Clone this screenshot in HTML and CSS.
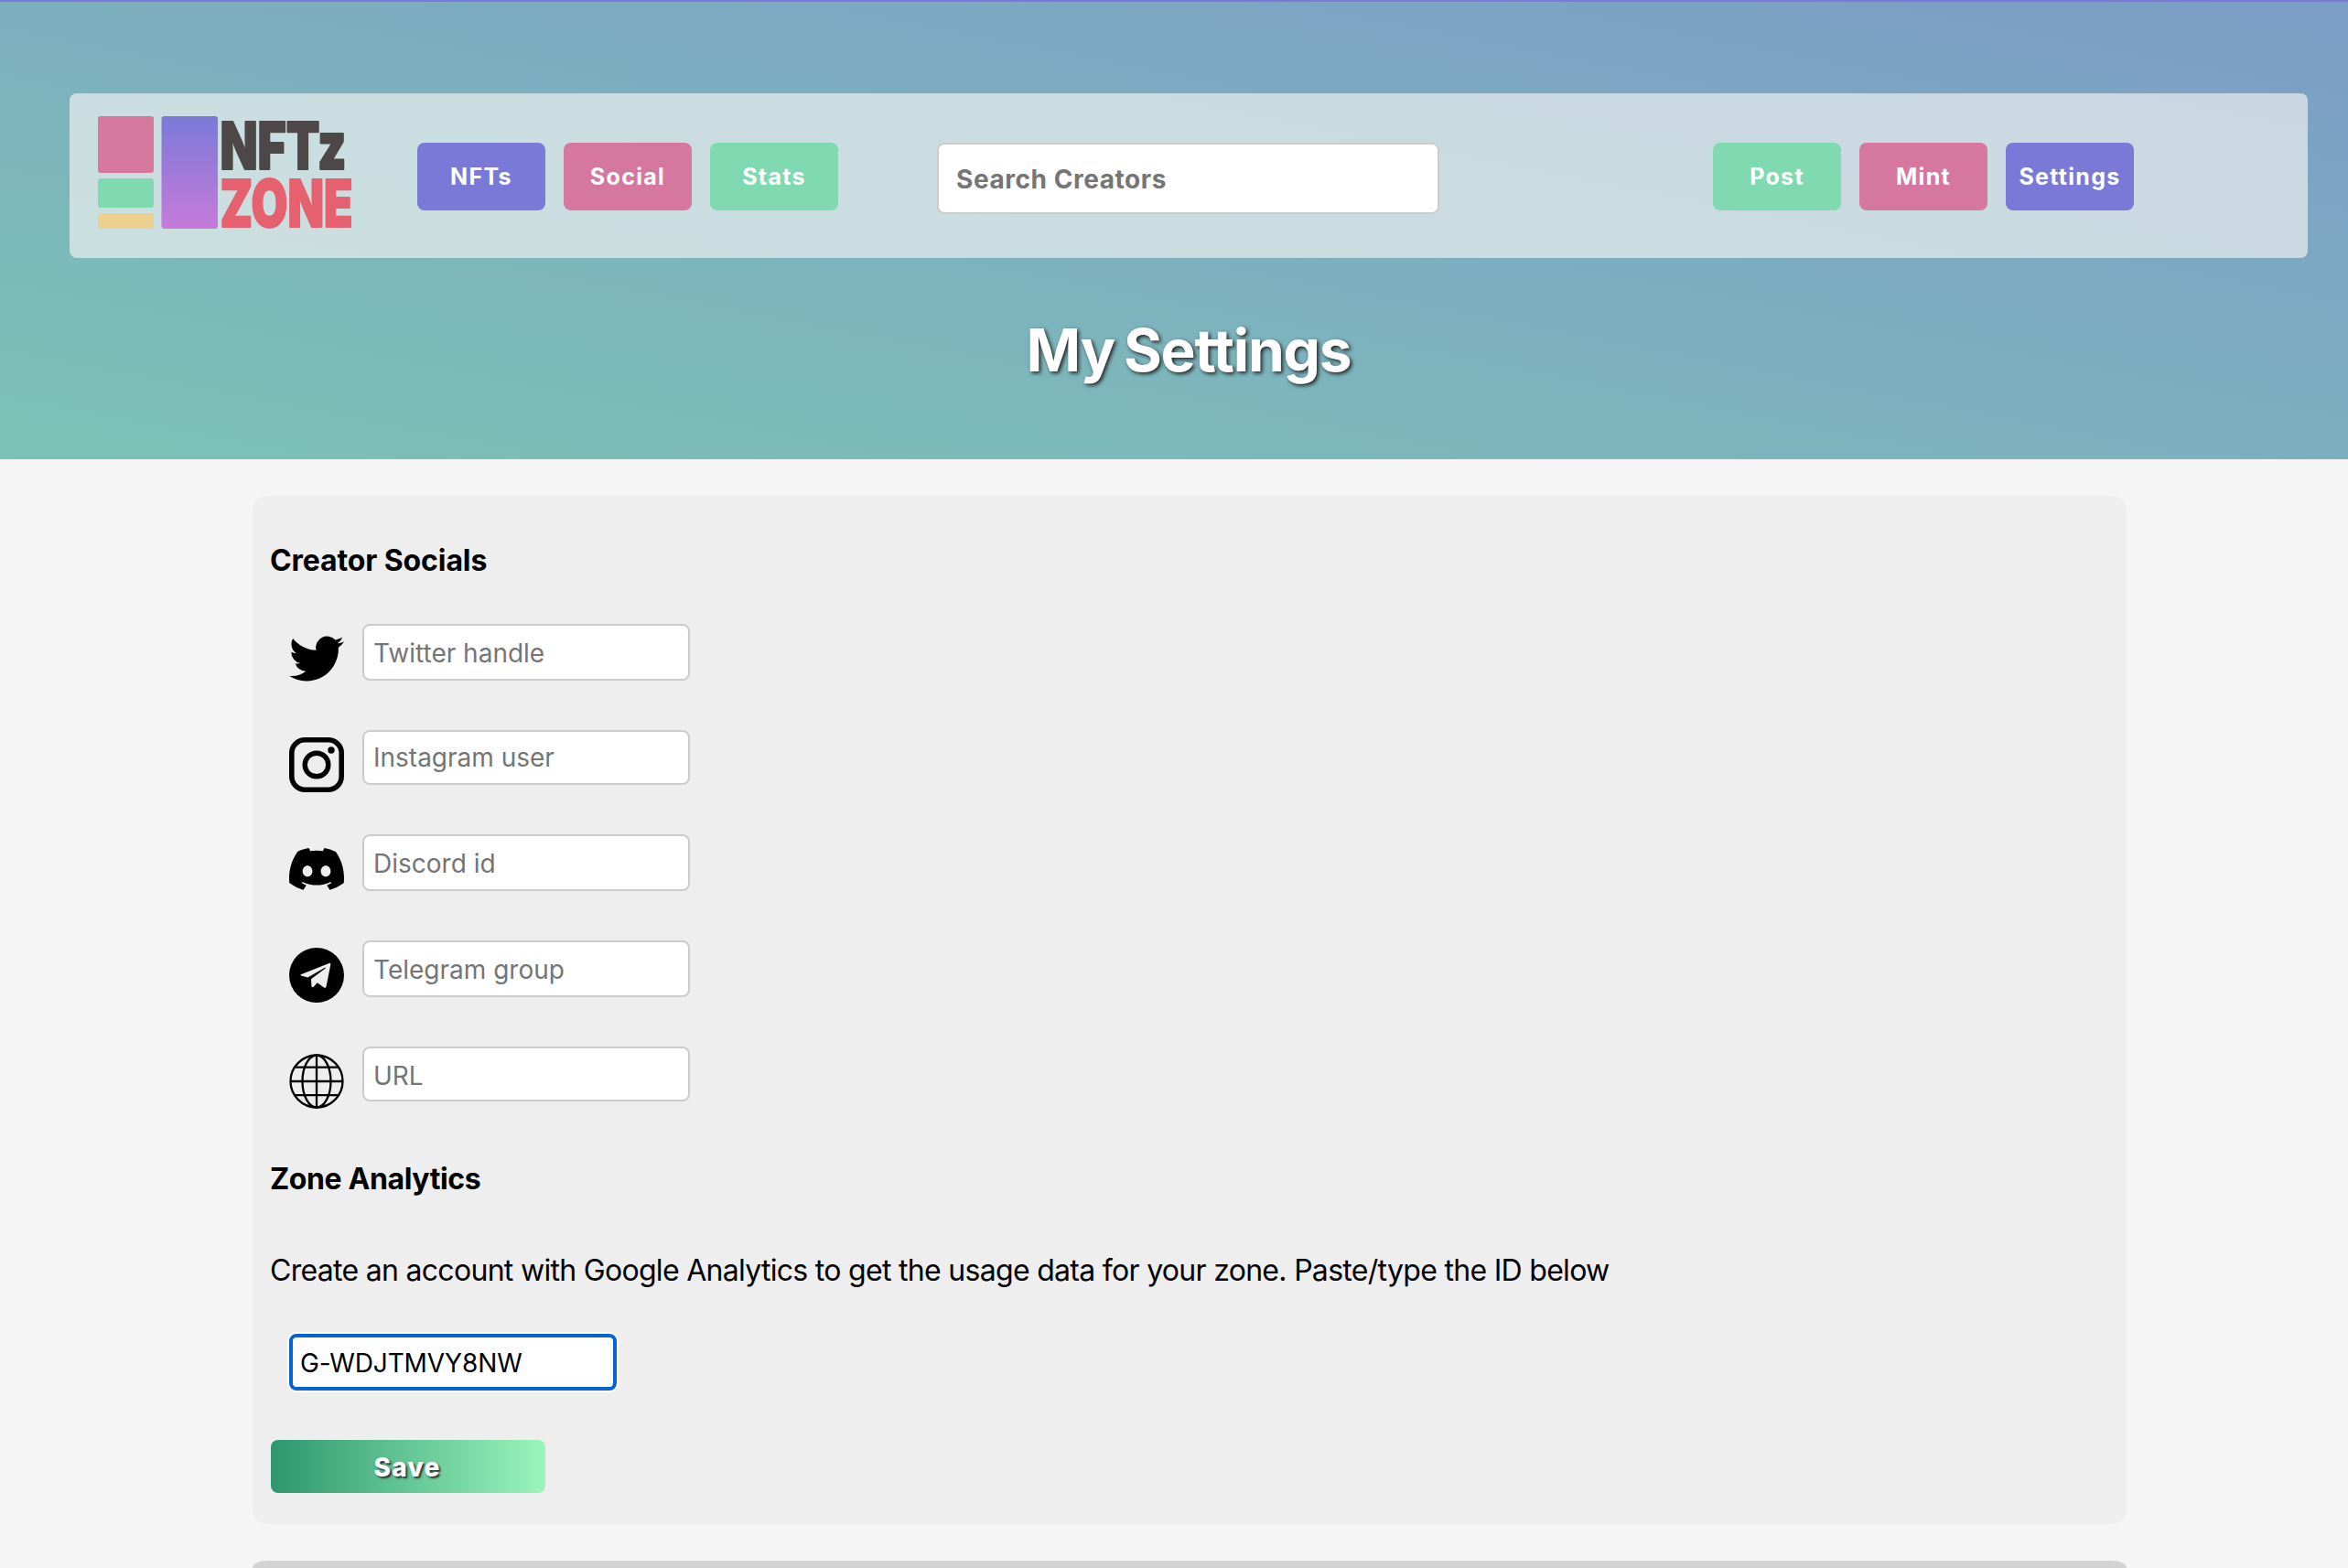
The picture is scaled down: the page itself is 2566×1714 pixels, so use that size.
FILE: index.html
```html
<!DOCTYPE html>
<html lang="en">
<head>
<meta charset="utf-8">
<title>My Settings</title>
<link rel="stylesheet" href="styles.css">
</head>
<body>
<header class="hero">
  <nav class="navbar">
    <svg class="logo" width="280" height="124" viewBox="0 0 280 124" role="img" aria-label="NFTz Zone">
      <defs>
        <linearGradient id="tower" x1="0" y1="0" x2="0" y2="1">
          <stop offset="0" stop-color="#7b79d8"/>
          <stop offset="1" stop-color="#c67ad9"/>
        </linearGradient>
      </defs>
      <rect x="1" y="0" width="61" height="62" rx="3" fill="#d6779f"/>
      <rect x="1" y="68" width="61" height="32" rx="3" fill="#7fd9b1"/>
      <rect x="1" y="106" width="61" height="17" rx="3" fill="#ebd08e"/>
      <rect x="70.500" y="0" width="61.500" height="123" rx="3" fill="url(#tower)"/>
      <text class="logo-text logo-dark" x="134.500" y="57.500" textLength="138" lengthAdjust="spacingAndGlyphs">NFTz</text>
      <text class="logo-text logo-red" x="134.500" y="120.500" textLength="145" lengthAdjust="spacingAndGlyphs">ZONE</text>
    </svg>
    <div class="nav-group nav-left">
      <a class="nav-btn violet">NFTs</a>
      <a class="nav-btn pink">Social</a>
      <a class="nav-btn green">Stats</a>
    </div>
    <input class="search" type="text" placeholder="Search Creators">
    <div class="nav-group nav-right">
      <a class="nav-btn green">Post</a>
      <a class="nav-btn pink">Mint</a>
      <a class="nav-btn violet">Settings</a>
    </div>
  </nav>
  <h1 class="title">My Settings</h1>
</header>
<main class="page">
  <section class="card">
    <h2 class="heading">Creator Socials</h2>
    <div class="socials">
      <label class="row">
        <svg class="icon" viewBox="0 0 24 24"><path d="M23.953 4.570a10 10 0 01-2.825.775 4.958 4.958 0 002.163-2.723c-.951.555-2.005.959-3.127 1.184a4.920 4.920 0 00-8.384 4.482C7.690 8.095 4.067 6.130 1.640 3.162a4.822 4.822 0 00-.666 2.475c0 1.710.870 3.213 2.188 4.096a4.904 4.904 0 01-2.228-.616v.060a4.923 4.923 0 003.946 4.827 4.996 4.996 0 01-2.212.085 4.936 4.936 0 004.604 3.417 9.867 9.867 0 01-6.102 2.105c-.390 0-.779-.023-1.170-.067a13.995 13.995 0 007.557 2.209c9.053 0 13.998-7.496 13.998-13.985 0-.210 0-.420-.015-.630A9.935 9.935 0 0024 4.590z"/></svg>
        <input class="field" type="text" placeholder="Twitter handle">
      </label>
      <label class="row row-short">
        <svg class="icon" viewBox="0 0 60 60">
          <rect x="2.800" y="2.800" width="54.400" height="54.400" rx="14.500" fill="none" stroke="#000" stroke-width="5.600"/>
          <circle cx="30" cy="30" r="12.800" fill="none" stroke="#000" stroke-width="5.400"/>
          <circle cx="46" cy="14" r="3.700"/>
        </svg>
        <input class="field field-short" type="text" placeholder="Instagram user">
      </label>
      <label class="row">
        <svg class="icon" viewBox="0 0 16 16"><path d="M13.545 2.907a13.227 13.227 0 0 0-3.257-1.011.05.05 0 0 0-.052.025c-.141.250-.297.577-.406.833a12.190 12.190 0 0 0-3.658 0 8.258 8.258 0 0 0-.412-.833.051.051 0 0 0-.052-.025c-1.125.194-2.220.534-3.257 1.011a.041.041 0 0 0-.021.018C.356 6.024-.213 9.047.066 12.032c.001.014.010.028.021.037a13.276 13.276 0 0 0 3.995 2.020.050.050 0 0 0 .056-.019c.308-.420.582-.863.818-1.329a.050.050 0 0 0-.010-.059.051.051 0 0 0-.018-.011 8.875 8.875 0 0 1-1.248-.595.050.050 0 0 1-.020-.066.051.051 0 0 1 .015-.019c.084-.063.168-.129.248-.195a.050.050 0 0 1 .051-.007c2.619 1.196 5.454 1.196 8.041 0a.052.052 0 0 1 .053.007c.080.066.164.132.248.195a.051.051 0 0 1-.004.085 8.254 8.254 0 0 1-1.249.594.050.050 0 0 0-.030.030.052.052 0 0 0 .003.041c.240.465.515.909.817 1.329a.050.050 0 0 0 .056.019 13.235 13.235 0 0 0 4.001-2.020.049.049 0 0 0 .021-.037c.334-3.451-.559-6.449-2.366-9.106a.034.034 0 0 0-.020-.019zm-8.198 7.307c-.789 0-1.438-.724-1.438-1.612 0-.889.637-1.613 1.438-1.613.807 0 1.450.730 1.438 1.613 0 .888-.637 1.612-1.438 1.612zm5.316 0c-.788 0-1.438-.724-1.438-1.612 0-.889.637-1.613 1.438-1.613.807 0 1.451.730 1.438 1.613 0 .888-.631 1.612-1.438 1.612z"/></svg>
        <input class="field" type="text" placeholder="Discord id">
      </label>
      <label class="row">
        <svg class="icon" viewBox="0 0 60 60">
          <circle cx="30" cy="30" r="30"/>
          <path fill="#eee" d="M12.800 29.200L43.600 17q2-.6 1.700 1.500L40.500 42.600q-.6 2-2.400.9L30.700 38.300 27 42.600q-2.200 1.500-2.600-.8L24 34.200 39.600 22.400q.8-1-.6-.6L20.400 32.500 13 30.600q-1.200-.7-.2-1.400z"/>
        </svg>
        <input class="field" type="text" placeholder="Telegram group">
      </label>
      <label class="row">
        <svg class="icon" viewBox="0 0 60 60" fill="none" stroke="#000" stroke-width="2.300">
          <circle cx="30" cy="30" r="28.500"/>
          <ellipse cx="30" cy="30" rx="15.500" ry="28.500"/>
          <path d="M30 1.500v57M1.500 30h57M6.500 14.700h47M6.500 45.200h47"/>
        </svg>
        <input class="field field-url" type="text" placeholder="URL">
      </label>
    </div>
    <h2 class="heading heading-zone">Zone Analytics</h2>
    <p class="hint">Create an account with Google Analytics to get the usage data for your zone. Paste/type the ID below</p>
    <input class="field field-active" type="text" value="G-WDJTMVY8NW">
    <button class="save" type="button">Save</button>
  </section>
  <section class="card card-next"></section>
</main>
</body>
</html>
```
FILE: styles.css
```css
* { box-sizing: border-box; }

body {
  margin: 0;
  background: #f5f5f5;
  color: #000;
  font-family: Inter, sans-serif;
}

/* Header */
.hero {
  height: 502px;
  padding: 100px 44px 0 76px;
  border-top: 2px solid #7b79d8;
  background: linear-gradient(to top right, #7cc2b6, #7c9dc7);
}
.navbar {
  height: 180px;
  padding: 2px 0 0 30px;
  display: flex;
  align-items: center;
  border-radius: 8px;
  background: rgba(245, 245, 243, .65);
}
.logo {
  flex: none;
  align-self: flex-start;
  margin-top: 23px;
  overflow: visible;
}
.logo-text {
  font-weight: 900;
  font-size: 71px;
  stroke-width: 2px;
  stroke-linejoin: round;
}
.logo-dark { fill: #4d4747; stroke: #4d4747; }
.logo-red { fill: #e5616f; stroke: #e5616f; }

.nav-group { display: flex; gap: 20px; }
.nav-left { margin-left: 70px; }
.nav-right { margin-left: 299px; }
.nav-btn {
  width: 140px;
  height: 74px;
  display: flex;
  align-items: center;
  justify-content: center;
  border-radius: 8px;
  color: #fff;
  font-weight: 700;
  font-size: 25px;
  letter-spacing: 1.3px;
}
.violet { background: #7b79d8; }
.pink { background: #d6779f; }
.green { background: #7fd9b1; }

.search {
  width: 549px;
  height: 78px;
  margin: 4px 0 0 108px;
  padding: 2px 19px 0;
  border: 2px solid #ccc;
  border-radius: 8px;
  background: #fff;
  font: 700 28px Inter, sans-serif;
  letter-spacing: .55px;
}
.title {
  margin: 62px 0 0;
  color: #fff;
  font-size: 64px;
  font-weight: 700;
  line-height: 77px;
  letter-spacing: -1.2px;
  word-spacing: -4px;
  text-align: center;
  text-shadow: 2px 2px 4px #222;
}

/* Settings card */
.page { padding: 40px 242px 0 276px; }
.card {
  height: 1124px;
  padding: 51px 20px 0 19px;
  border-radius: 16px;
  background: #eee;
}
.card-next {
  height: 8px;
  margin-top: 40px;
  border-radius: 16px 16px 0 0 / 8px 8px 0 0;
  background: #d3d3d3;
}
.heading {
  margin: 0;
  font-size: 32px;
  font-weight: 700;
  line-height: 39px;
  letter-spacing: -.1px;
}
.socials { margin-top: 50px; padding-left: 21px; }
.row {
  height: 116px;
  display: flex;
  align-items: flex-start;
  gap: 20px;
}
.row-short { height: 114px; }
.icon { width: 60px; height: 60px; margin-top: 8px; }
.field {
  display: block;
  width: 358px;
  height: 62px;
  padding: 2px 10px 0;
  border: 2px solid #ccc;
  border-radius: 8px;
  background: #fff;
  color: #000;
  font: 400 28px Inter, sans-serif;
}
.field-short { height: 60px; padding-top: 0; }
.field-url { height: 60px; padding-top: 4px; }
input::placeholder { color: #757575; opacity: 1; }

.heading-zone { margin-top: 9px; letter-spacing: -.4px; }
.hint {
  margin: 61px 0 0;
  font-size: 32px;
  line-height: 39px;
  letter-spacing: -.7px;
}
.field-active {
  margin: 50px 0 0 21px;
  padding: 2px 8px 0;
  border: 4px solid #0564cf;
  box-shadow: 0 0 0 2px #fff;
  letter-spacing: -.1px;
}
.save {
  display: block;
  width: 300px;
  height: 58px;
  margin: 54px 0 0 1px;
  padding: 1px 2px 0 0;
  border: 0;
  border-radius: 8px;
  background: linear-gradient(to right, #2e976f, #99f5bb);
  color: #fff;
  font: 800 28px Inter, sans-serif;
  letter-spacing: 1.3px;
  text-shadow: 2px 2px 2px #333;
}
```
